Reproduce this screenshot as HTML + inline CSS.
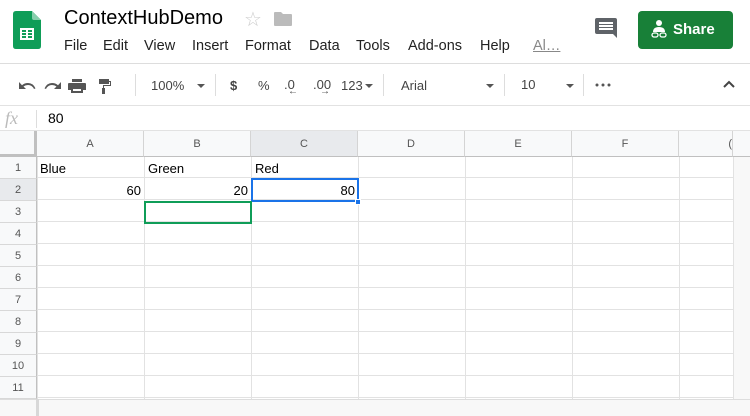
<!DOCTYPE html>
<html><head><meta charset="utf-8"><style>
*{box-sizing:border-box;margin:0;padding:0}
body{width:750px;height:416px;overflow:hidden;background:#fff;font-family:"Liberation Sans",Arial,sans-serif;position:relative;color:#000}
.a{position:absolute}
.m{position:absolute;top:38px;font-size:14.5px;color:#222;white-space:nowrap}
.tb{color:#444;font-size:13px}
.sep{position:absolute;top:74px;width:1px;height:22px;background:#ddd}
.dd{position:absolute;width:0;height:0;border-left:4px solid transparent;border-right:4px solid transparent;border-top:4px solid #555}
.ch{position:absolute;top:131px;height:26px;background:#f8f9fa;border-right:1px solid #d4d4d4;border-bottom:1px solid #c0c0c0;font-size:11px;color:#555;text-align:center;line-height:26px}
.rh{position:absolute;left:0;width:37px;height:22px;background:#f8f9fa;border-bottom:1px solid #d8d8d8;border-right:1px solid #c0c0c0;font-size:11px;color:#555;text-align:center;line-height:22px}
.cell{position:absolute;font-size:13px;line-height:22px}
</style></head><body>
<svg class="a" style="left:13px;top:11px" width="28" height="38" viewBox="0 0 28 38">
<path d="M3 0H19L28 9V35Q28 38 25 38H3Q0 38 0 35V3Q0 0 3 0Z" fill="#0f9d58"/>
<path d="M19 0L28 9H21Q19 9 19 7Z" fill="#87ceac"/>
<rect x="7" y="17" width="14" height="12" fill="#fff"/>
<g fill="#0f9d58"><rect x="9" y="19" width="4" height="2"/><rect x="15" y="19" width="4" height="2"/><rect x="9" y="22" width="4" height="2"/><rect x="15" y="22" width="4" height="2"/><rect x="9" y="25" width="4" height="2"/><rect x="15" y="25" width="4" height="2"/></g>
</svg>
<div class="a" style="left:64px;top:7px;font-size:20px;color:#000">ContextHubDemo</div>
<div class="a" style="left:244px;top:7px;font-size:20px;color:#ccc">☆</div>
<svg class="a" style="left:274px;top:12px" width="18" height="14" viewBox="0 0 18 14"><path d="M0 1Q0 0 1 0H7L9 2H17Q18 2 18 3V13Q18 14 17 14H1Q0 14 0 13Z" fill="#bbb"/></svg>
<div class="m" style="left:64px">File</div>
<div class="m" style="left:103px">Edit</div>
<div class="m" style="left:144px">View</div>
<div class="m" style="left:192px">Insert</div>
<div class="m" style="left:245px">Format</div>
<div class="m" style="left:309px">Data</div>
<div class="m" style="left:356px">Tools</div>
<div class="m" style="left:408px">Add-ons</div>
<div class="m" style="left:480px">Help</div>
<div class="m" style="left:533px;color:#888;text-decoration:underline">Al…</div>
<svg class="a" style="left:595px;top:18px" width="22" height="22" viewBox="0 0 22 22"><path d="M2 0H20Q22 0 22 2V20L18 16H2Q0 16 0 14V2Q0 0 2 0Z" fill="#5f6368"/><rect x="4" y="4" width="14" height="2" fill="#fff"/><rect x="4" y="7" width="14" height="2" fill="#fff"/><rect x="4" y="10" width="14" height="2" fill="#fff"/></svg>
<div class="a" style="left:638px;top:11px;width:95px;height:38px;background:#188038;border-radius:4px;color:#fff;font-size:15px;font-weight:bold;line-height:38px;padding-left:35px">Share</div>
<svg class="a" style="left:651px;top:20px" width="16" height="18" viewBox="0 0 16 18"><circle cx="8" cy="3" r="3" fill="#fff"/><path d="M2 12Q2 7 8 7Q14 7 14 12Z" fill="#fff"/><rect x="1" y="13" width="6" height="4" rx="2" fill="none" stroke="#fff" stroke-width="1.3"/><rect x="9" y="13" width="6" height="4" rx="2" fill="none" stroke="#fff" stroke-width="1.3"/></svg>
<div class="a" style="left:0;top:63px;width:750px;height:1px;background:#ddd"></div>
<div class="a" style="left:0;top:105px;width:750px;height:1px;background:#e2e2e2"></div>
<svg class="a" style="left:17px;top:78px" width="100" height="16" viewBox="0 0 100 16" fill="#555">
<path d="M2 4V11H9L6.5 8.5Q8.5 7 11 7Q15 7 17 11L18.5 10.4Q16 5 11 5Q7.5 5 5 7.2Z"/>
<path d="M44 4V11H37L39.5 8.5Q37.5 7 35 7Q31 7 29 11L27.5 10.4Q30 5 35 5Q38.5 5 41 7.2Z"/>
<path d="M55 1H65V4H55Z M52 5H68Q69 5 69 6V12H66V15H54V12H51V6Q51 5 52 5Z M56 11V13H64V11Z"/>
<path d="M82 1H92V6H82Z M92 3H94V8H87V10H88V16H85V10H86V7H93V4H92Z"/>
</svg>
<div class="sep" style="left:135px"></div>
<div class="a tb" style="left:151px;top:78px">100%</div><div class="dd" style="left:197px;top:84px"></div>
<div class="sep" style="left:215px"></div>
<div class="a tb" style="left:230px;top:78px;font-weight:bold">$</div>
<div class="a tb" style="left:258px;top:78px">%</div>
<div class="a tb" style="left:284px;top:77px">.0</div><div class="a tb" style="left:288px;top:86px;font-size:10px">←</div>
<div class="a tb" style="left:313px;top:77px">.00</div><div class="a tb" style="left:320px;top:86px;font-size:10px">→</div>
<div class="a tb" style="left:341px;top:78px">123</div><div class="dd" style="left:365px;top:84px"></div>
<div class="sep" style="left:383px"></div>
<div class="a tb" style="left:401px;top:78px">Arial</div><div class="dd" style="left:486px;top:84px"></div>
<div class="sep" style="left:504px"></div>
<div class="a tb" style="left:521px;top:77px">10</div><div class="dd" style="left:566px;top:84px"></div>
<div class="sep" style="left:583px"></div>
<svg class="a" style="left:595px;top:83px" width="16" height="4"><circle cx="2" cy="2" r="1.5" fill="#555"/><circle cx="8" cy="2" r="1.5" fill="#555"/><circle cx="14" cy="2" r="1.5" fill="#555"/></svg>
<svg class="a" style="left:723px;top:80px" width="12" height="8" viewBox="0 0 12 8"><path d="M1 7L6 2L11 7" fill="none" stroke="#444" stroke-width="2"/></svg>
<div class="a" style="left:5px;top:108px;font-family:'Liberation Serif',serif;font-style:italic;font-size:18px;color:#bbb">fx</div>
<div class="a" style="left:36px;top:110px;width:1px;height:18px;background:#ddd"></div>
<div class="a" style="left:48px;top:110px;font-size:14px">80</div>
<div class="a" style="left:0;top:130px;width:750px;height:1px;background:#e2e2e2"></div>
<div class="a" style="left:0;top:131px;width:750px;height:268px;background-image:linear-gradient(#e2e2e2 1px,transparent 1px),linear-gradient(90deg,#e2e2e2 1px,transparent 1px);background-size:107px 22px,107px 22px;background-position:0 156px,37px 0"></div>
<div class="ch" style="left:0;width:37px;border-right:3px solid #c0c0c0;border-bottom:3px solid #c0c0c0"></div>
<div class="ch" style="left:37px;width:107px">A</div>
<div class="ch" style="left:144px;width:107px">B</div>
<div class="ch" style="left:251px;width:107px;background:#e8eaed">C</div>
<div class="ch" style="left:358px;width:107px">D</div>
<div class="ch" style="left:465px;width:107px">E</div>
<div class="ch" style="left:572px;width:107px">F</div>
<div class="ch" style="left:679px;width:54px;text-align:right">(</div>
<div class="a" style="left:733px;top:131px;width:17px;height:26px;background:#f8f9fa;border-bottom:1px solid #c0c0c0"></div>
<div class="rh" style="top:157px">1</div>
<div class="rh" style="top:179px;background:#e8eaed">2</div>
<div class="rh" style="top:201px">3</div>
<div class="rh" style="top:223px">4</div>
<div class="rh" style="top:245px">5</div>
<div class="rh" style="top:267px">6</div>
<div class="rh" style="top:289px">7</div>
<div class="rh" style="top:311px">8</div>
<div class="rh" style="top:333px">9</div>
<div class="rh" style="top:355px">10</div>
<div class="rh" style="top:377px">11</div>
<div class="cell" style="left:40px;top:158px">Blue</div>
<div class="cell" style="left:148px;top:158px">Green</div>
<div class="cell" style="left:255px;top:158px">Red</div>
<div class="cell" style="left:37px;top:180px;width:104px;text-align:right">60</div>
<div class="cell" style="left:144px;top:180px;width:104px;text-align:right">20</div>
<div class="cell" style="left:251px;top:180px;width:104px;text-align:right">80</div>
<div class="a" style="left:251px;top:178px;width:108px;height:24px;border:2px solid #1a73e8"></div>
<div class="a" style="left:355px;top:199px;width:6px;height:6px;background:#1a73e8;border:1px solid #fff"></div>
<div class="a" style="left:144px;top:201px;width:108px;height:23px;border:2px solid #0f9d58"></div>
<div class="a" style="left:733px;top:157px;width:17px;height:242px;background:#f8f8f8;border-left:1px solid #e2e2e2"></div>
<div class="a" style="left:0;top:399px;width:750px;height:17px;background:#f8f8f8;border-top:1px solid #ddd"></div>
<div class="a" style="left:36px;top:399px;width:3px;height:17px;background:#d8d8d8"></div>
</body></html>
